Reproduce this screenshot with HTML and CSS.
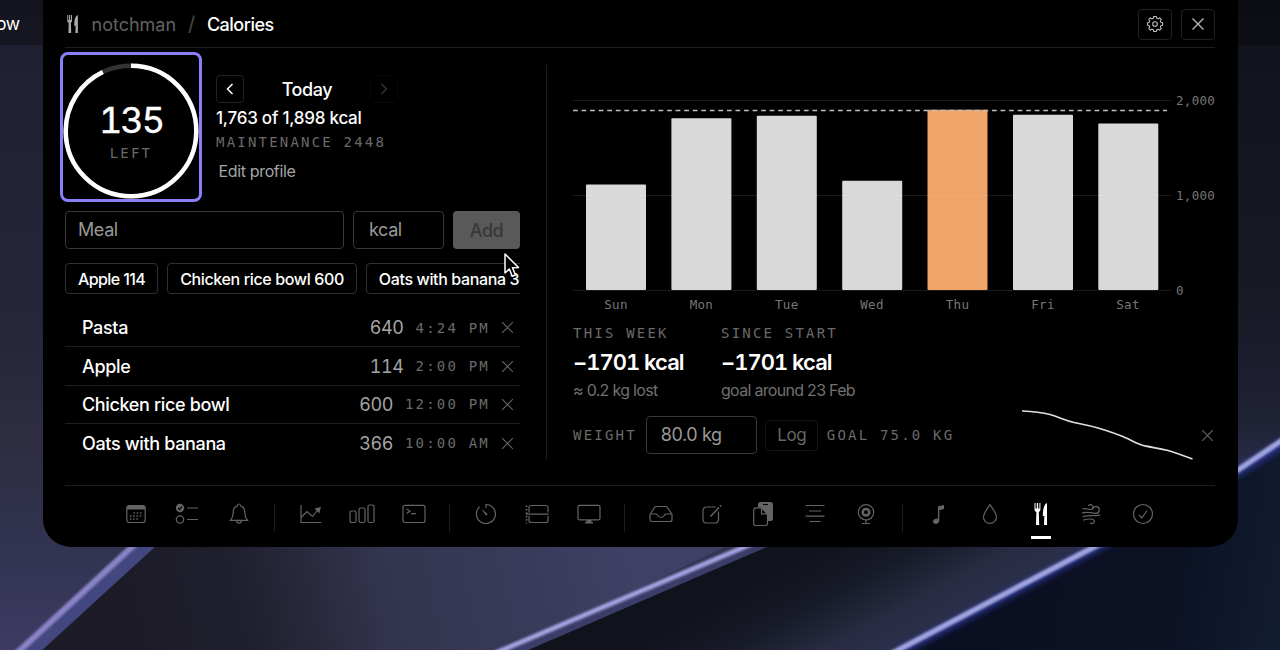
FILE: index.html
```
<!DOCTYPE html>
<html lang="en">
<head>
    <meta charset="UTF-8">
    <meta name="viewport" content="width=device-width, initial-scale=1.0">
    <title>notchman / Calories</title>
    <link rel="stylesheet" href="styles.css">
</head>
<body>
    <!-- Desktop wallpaper -->
    <svg class="wallpaper" viewBox="0 0 1280 650" aria-hidden="true">
        <defs>
            <linearGradient id="left" x1="0" y1="0" x2="0" y2="1">
                <stop offset="0" stop-color="#1e2030"/>
                <stop offset=".5" stop-color="#25263a"/>
                <stop offset=".68" stop-color="#2e2d42"/>
                <stop offset=".84" stop-color="#313350"/>
                <stop offset="1" stop-color="#3e3b63"/>
            </linearGradient>
            <linearGradient id="mid" gradientUnits="userSpaceOnUse" x1="130" y1="610" x2="620" y2="500">
                <stop offset="0" stop-color="#1d1b28"/>
                <stop offset=".22" stop-color="#1f1f2d"/>
                <stop offset=".5" stop-color="#33344e"/>
                <stop offset="1" stop-color="#3f4064"/>
            </linearGradient>
            <linearGradient id="right" gradientUnits="userSpaceOnUse" x1="755" y1="575" x2="817" y2="691">
                <stop offset="0" stop-color="#10131b"/>
                <stop offset=".4" stop-color="#171a27"/>
                <stop offset=".75" stop-color="#282b42"/>
                <stop offset="1" stop-color="#2c2f4a"/>
            </linearGradient>
            <linearGradient id="far" gradientUnits="userSpaceOnUse" x1="1000" y1="600" x2="1280" y2="650">
                <stop offset="0" stop-color="#0b0f22"/>
                <stop offset=".6" stop-color="#0c1224"/>
                <stop offset="1" stop-color="#121c31"/>
            </linearGradient>
            <linearGradient id="edge" x1="0" y1="0" x2="0" y2="1">
                <stop offset="0" stop-color="#10121b"/>
                <stop offset=".6" stop-color="#171925"/>
                <stop offset=".85" stop-color="#202236"/>
                <stop offset="1" stop-color="#34365a"/>
            </linearGradient>
            <filter id="soft" x="-10%" y="-10%" width="120%" height="120%"><feGaussianBlur stdDeviation="1.2"/></filter>
            <filter id="glow" x="-10%" y="-10%" width="120%" height="120%"><feGaussianBlur stdDeviation="3"/></filter>
        </defs>
        <rect width="1280" height="650" fill="url(#left)"/>
        <path d="M22 660 160 525H770L490 660Z" fill="url(#mid)"/>
        <path d="M504 652 790 527H1140L890 660H504Z" fill="url(#right)"/>
        <path d="M1200 0H1280V460L1200 500Z" fill="url(#edge)"/>
        <path d="M897 651 1094 547 1238 470 1280 442V651Z" fill="url(#far)"/>
        <path d="M899 652 1094 549 1238 472 1290 439" fill="none" stroke="#2a3590" stroke-width="8" filter="url(#glow)"/>
        <path d="M14 667 166 528" stroke="#43477f" stroke-width="13"/>
        <path d="M488 663 780 537" stroke="#3c3c68" stroke-width="8"/>
        <g fill="none" filter="url(#soft)">
            <path d="M4 665 158 523" stroke="#8a84c8" stroke-width="6"/>
            <path d="M472 663 770 536" stroke="#a4a2e0" stroke-width="5"/>
            <path d="M885 657 1094 547 1238 470 1290 435" stroke="#a0a4de" stroke-width="5.5"/>
        </g>
    </svg>
    <div class="menubar">ow</div>

    <main class="panel">
        <header class="header">
            <svg class="brand-icon" width="12" height="18" viewBox="0 0 14 22" fill="currentColor">
                <path d="M0 0h1.2v6h1V0h1.3v6h1V0h1.3v7c0 1.3-.6 2-1.4 2.5L4.8 22H1.4l.4-12.500C.7 9 0 8.300 0 7zM13 0v22H9.900l.3-9H8.500C8.500 5.500 10 1 13 0z"/>
            </svg>
            <span class="app">notchman</span>
            <span class="slash">/</span>
            <span class="title">Calories</span>
            <button class="icon-btn push">
                <svg width="18" height="18" viewBox="0 0 18 18" fill="none" stroke="currentColor" stroke-width="1.1" stroke-linejoin="round">
                    <path d="M7.700 1.500h2.600l.5 1.800 1.300.5 1.600-.9 1.500 1.500-.9 1.600.5 1.300 1.700.5v2.400l-1.700.5-.5 1.300.9 1.600-1.500 1.500-1.600-.9-1.300.5-.5 1.800H7.700l-.5-1.800-1.300-.5-1.600.9-1.500-1.500.9-1.600-.5-1.300-1.700-.5V7.800l1.700-.5.5-1.300-.9-1.600 1.500-1.500 1.600.9 1.300-.5z"/>
                    <circle cx="9" cy="9" r="2.300"/>
                </svg>
            </button>
            <button class="icon-btn">
                <svg width="12" height="12" viewBox="0 0 12 12" stroke="currentColor" stroke-width="1.300"><path d="M.5.5l11 11M11.500.5l-11 11"/></svg>
            </button>
        </header>

        <div class="content">
            <section class="log">
                <div class="summary">
                    <button class="gauge">
                        <svg class="ring" width="136" height="136" viewBox="0 0 136 136" fill="none" stroke-width="4.500">
                            <circle cx="68" cy="68" r="65.300" stroke="#333"/>
                            <circle cx="68" cy="68" r="65.300" stroke="#fff" pathLength="1898" stroke-dasharray="1763 1898" transform="rotate(-90 68 68)"/>
                        </svg>
                        <span class="gauge-value">135</span>
                        <span class="gauge-label">LEFT</span>
                    </button>
                    <div class="day">
                        <div class="day-nav">
                            <button class="step"><svg width="8" height="12" viewBox="0 0 8 12" fill="none" stroke="currentColor" stroke-width="1.500"><path d="M6.500 1 1.500 6l5 5"/></svg></button>
                            <span class="day-name">Today</span>
                            <button class="step off"><svg width="8" height="12" viewBox="0 0 8 12" fill="none" stroke="currentColor" stroke-width="1.500"><path d="m1.500 1 5 5-5 5"/></svg></button>
                        </div>
                        <div class="eaten">1,763 of 1,898 kcal</div>
                        <div class="mono maintenance">MAINTENANCE 2448</div>
                        <div class="edit">Edit profile</div>
                    </div>
                </div>

                <div class="form">
                    <div class="field meal">Meal</div>
                    <div class="field kcal">kcal</div>
                    <button class="add">Add</button>
                </div>

                <div class="chips">
                    <span class="chip tight">Apple 114</span>
                    <span class="chip">Chicken rice bowl 600</span>
                    <span class="chip">Oats with banana 366</span>
                </div>

                <ul class="meals">
                    <li><span class="name">Pasta</span><span class="amount">640</span><span class="mono time">4:24 PM</span><svg class="remove" viewBox="0 0 10 10"><path d="M0 0l10 10M10 0 0 10"/></svg></li>
                    <li><span class="name">Apple</span><span class="amount">114</span><span class="mono time">2:00 PM</span><svg class="remove" viewBox="0 0 10 10"><path d="M0 0l10 10M10 0 0 10"/></svg></li>
                    <li><span class="name">Chicken rice bowl</span><span class="amount">600</span><span class="mono time">12:00 PM</span><svg class="remove" viewBox="0 0 10 10"><path d="M0 0l10 10M10 0 0 10"/></svg></li>
                    <li><span class="name">Oats with banana</span><span class="amount">366</span><span class="mono time">10:00 AM</span><svg class="remove" viewBox="0 0 10 10"><path d="M0 0l10 10M10 0 0 10"/></svg></li>
                </ul>
            </section>

            <section class="trends">
                <svg class="chart" width="642" height="230" viewBox="573 90 642 230">
                    <g class="bars">
                        <rect x="586" y="184.500" width="60" height="105.500" rx="1"/>
                        <rect x="671.400" y="118.200" width="60" height="171.800" rx="1"/>
                        <rect x="756.800" y="115.700" width="60" height="174.300" rx="1"/>
                        <rect x="842.200" y="180.700" width="60" height="109.300" rx="1"/>
                        <rect class="over" x="927.500" y="109.800" width="60" height="180.200" rx="1"/>
                        <rect x="1013" y="114.800" width="60" height="175.200" rx="1"/>
                        <rect x="1098.300" y="123.400" width="60" height="166.600" rx="1"/>
                    </g>
                    <path class="grid" d="M573 100.500h598M573 195.500h598M573 290.500h598"/>
                    <path class="target" d="M573 110.600h594"/>
                    <g class="axis">
                        <text x="1176" y="105">2,000</text>
                        <text x="1176" y="200">1,000</text>
                        <text x="1176" y="294.500">0</text>
                    </g>
                    <g class="axis days">
                        <text x="616" y="308.500">Sun</text>
                        <text x="701.400" y="308.500">Mon</text>
                        <text x="786.800" y="308.500">Tue</text>
                        <text x="872" y="308.500">Wed</text>
                        <text x="957.500" y="308.500">Thu</text>
                        <text x="1043" y="308.500">Fri</text>
                        <text x="1128" y="308.500">Sat</text>
                    </g>
                </svg>

                <div class="stats">
                    <div class="stat">
                        <div class="mono">THIS WEEK</div>
                        <div class="stat-value">−1701 kcal</div>
                        <div class="stat-note">≈ 0.2 kg lost</div>
                    </div>
                    <div class="stat">
                        <div class="mono">SINCE START</div>
                        <div class="stat-value">−1701 kcal</div>
                        <div class="stat-note">goal around 23 Feb</div>
                    </div>
                </div>

                <div class="weight">
                    <span class="mono">WEIGHT</span>
                    <div class="field kg">80.0 kg</div>
                    <button class="log-btn">Log</button>
                    <span class="mono">GOAL 75.0 KG</span>
                    <svg class="spark" width="172" height="52" viewBox="1021 409 172 52" fill="none">
                        <path d="M1022 411c10 .3 19 1 28 3.500 10 3 14 5.500 24 8 8 1.700 14 2.500 24 5.500 10 3 18 5.500 27 9.500 8 3.500 13 7 21 8.700 8 1.600 13 1.800 22 4.300 9 2.800 15 5 24.500 8.500" stroke="#e0e0e0" stroke-width="1.700"/>
                    </svg>
                    <svg class="remove" viewBox="0 0 10 10"><path d="M0 0l10 10M10 0 0 10"/></svg>
                </div>
            </section>
        </div>

        <nav class="tools">
            <span class="tool"><svg viewBox="0 0 24 24"><rect x="2.800" y="3.500" width="18.400" height="17" rx="2.500"/><path class="solid" d="M3 7.500V5.500a2 2 0 0 1 2-2h14a2 2 0 0 1 2 2v2z"/><path d="M9.500 11h9.500M6 14h13M6 17h9.500" stroke-width="1.500" stroke-dasharray="1.500 1.700"/></svg></span>
            <span class="tool"><svg viewBox="0 0 24 24"><circle class="solid" cx="5" cy="6" r="4.200"/><path d="m3.200 6 1.400 1.600L6.900 4.300" stroke="#000"/><circle cx="5" cy="17.500" r="3.700"/><path d="M12 6h11M12 17.500h11"/></svg></span>
            <span class="tool"><svg viewBox="0 0 24 24"><path d="M3.500 18.300c1.600-2 2.600-3 2.600-7.300 0-3.500 1.400-6.300 4.200-7 .2-1.300.8-2 1.700-2s1.500.7 1.700 2c2.800.7 4.200 3.500 4.200 7 0 4.300 1 5.300 2.600 7.300zM9.500 18.500c.2 1.800 1.100 2.700 2.500 2.700s2.300-.9 2.500-2.700"/></svg></span>
            <i class="sep"></i>
            <span class="tool"><svg viewBox="0 0 24 24"><path d="M2 3v17.500h20.500M2.500 15l5.500-5.500 5.500 5L19.500 7"/><path class="solid" d="M15.500 6.500 22 5l-1.700 6.500z"/></svg></span>
            <span class="tool wide"><svg viewBox="0 0 28 24"><rect x="2" y="9" width="6" height="11.500" rx="1.500"/><rect x="11" y="6" width="6" height="14.500" rx="1.500"/><rect x="20" y="3" width="6" height="17.500" rx="1.500"/></svg></span>
            <span class="tool"><svg viewBox="0 0 24 24"><rect x="1" y="3.300" width="22" height="17.200" rx="2"/><path d="m4.500 7 3.500 2.200-3.500 2.200M9 11.700h5"/></svg></span>
            <i class="sep"></i>
            <span class="tool"><svg viewBox="0 0 24 24"><path d="M12 6V2.500a9.500 9.500 0 1 1-6.300 2.300"/><path class="solid" d="M7.200 6.800 13 11.500a1 1 0 0 1-1.500 1.500z"/></svg></span>
            <span class="tool"><svg viewBox="0 0 24 24"><path d="M4 10.500V5.500a2 2 0 0 1 2-2h15a2 2 0 0 1 2 2v5M1 12.200h22.500M4 14v4.500a2 2 0 0 0 2 2h15a2 2 0 0 0 2-2V14"/><path d="M1.500 3.500v18" stroke-width="1.700" stroke-dasharray="1.700 1.700"/></svg></span>
            <span class="tool"><svg viewBox="0 0 24 24"><rect x="1" y="3.300" width="22" height="14.500" rx="1.500"/><path class="solid" d="M9.500 18h5v2H16v1.500H8V20h1.500z"/></svg></span>
            <i class="sep"></i>
            <span class="tool"><svg viewBox="0 0 24 24"><path d="M1 12.500 5.500 5.500Q6 4.500 7.500 4.500h9q1.500 0 2 1l4.500 7v5a2 2 0 0 1-2 2H3a2 2 0 0 1-2-2zM1 12h6.500c1 0 1 3.500 4.500 3.500s3.500-3.500 4.500-3.500H23"/></svg></span>
            <span class="tool"><svg viewBox="0 0 24 24"><path d="M15.500 5H6.500a3.500 3.500 0 0 0-3.500 3.500V17.500a3.500 3.500 0 0 0 3.500 3.500h8.500a3.500 3.500 0 0 0 3.500-3.500V9.500"/><path d="m10.500 14.500 8.500-9" stroke-width="1.500"/><path d="m20 4.500 1-1" stroke-width="1.800"/></svg></span>
            <span class="tool"><svg viewBox="0 0 24 24"><path class="solid" d="M7 5V2.500A2.500 2.500 0 0 1 9.500 0h10A2.500 2.500 0 0 1 22 2.500v14a2.500 2.500 0 0 1-2.500 2.500H17v-6l-7-8z"/><path d="M12 2.500h5" stroke="#000"/><path d="M10.500 5.800H5.200a2.500 2.500 0 0 0-2.500 2.500v12.900a2.500 2.500 0 0 0 2.500 2.500h8.800a2.500 2.500 0 0 0 2.500-2.500v-9zM10.500 5.800v6h6"/></svg></span>
            <span class="tool"><svg viewBox="0 0 24 24"><path d="M2.500 3.500h19M6 9h12M2.500 14.200h19M6.500 19.500h11"/></svg></span>
            <span class="tool"><svg viewBox="0 0 24 24"><circle cx="12" cy="10.300" r="7.700"/><circle cx="12" cy="10.300" r="3.300" stroke-width="2.500"/><path d="M12 18v3.500M8 21.500h8"/></svg></span>
            <i class="sep"></i>
            <span class="tool"><svg viewBox="0 0 24 24"><path class="solid" d="M12 4.200 18 3v4l-4.700 1.200V18c0 2.300-1.400 4-3.500 4-1.500 0-2.800-.9-2.800-2.500s1.500-2.600 3.300-2.800c1-.1 1.700-.3 1.700-1.200z"/></svg></span>
            <span class="tool"><svg viewBox="0 0 24 24"><path d="M12 2.500c2 3.500 6.500 8.500 6.500 12.700a6.500 6.200 0 0 1-13 0C5.500 11 10 6 12 2.500z"/></svg></span>
            <span class="tool active"><svg viewBox="0 0 24 24"><path class="solid" d="M5.500 1h1v5.500h1.300V1h1.300v5.500h1.300V1h1V7.500c0 1.200-.7 2-1.600 2.500l.4 13H7l.4-13C6.300 9.500 5.500 8.700 5.500 7.500zM18 1v22h-3l.3-9h-1.500C13.800 6.500 15.500 2 18 1z"/></svg></span>
            <span class="tool"><svg viewBox="0 0 24 24"><path d="M2.500 7c3-1.300 5 .5 8 .5a2.400 2.400 0 1 0-2-3.700M2 11c5-2 8 .3 14 .3a3.300 3.300 0 1 0-3.300-3.800M2.500 14.800c5-1.800 9-1.200 13-1.200 2 0 3.500 0 4.500-.8M3 18.300c3-1.300 6-1.500 9-1.200a2.300 2.300 0 1 1-2 3.600"/></svg></span>
            <span class="tool"><svg viewBox="0 0 24 24"><circle cx="12" cy="12" r="9.500"/><path d="m8 12.800 2.800 3.200L16 8.500"/></svg></span>
        </nav>
    </main>

    <svg class="cursor" width="20" height="28" viewBox="0 0 20 28"><path d="M2 2v19l4.300-4 3 7.300 3.200-1.300-3-7.200 6-.3z" fill="#000" stroke="#fff" stroke-width="1.500" stroke-linejoin="round"/></svg>
</body>
</html>
```
FILE: styles.css
```
* { box-sizing: border-box; }
body {
    margin: 0;
    width: 1280px;
    height: 650px;
    overflow: hidden;
    background: #1e2030;
    color: #fff;
    font-family: Inter, "Liberation Sans", sans-serif;
    font-size: 18px;
    letter-spacing: -0.4px;
}
button {
    background: none;
    border: 0;
    padding: 0;
    color: inherit;
    font: inherit;
    letter-spacing: inherit;
}
.wallpaper {
    position: absolute;
    inset: 0;
    width: 1280px;
    height: 650px;
}
.menubar {
    position: absolute;
    inset: 0 0 auto 0;
    height: 45px;
    line-height: 48px;
    font-size: 17.500px;
    text-indent: -4px;
    background: rgba(8, 9, 14, 0.45);
}

/* panel */
.panel {
    position: relative;
    width: 1195px;
    height: 547px;
    margin-left: 42.500px;
    padding: 0 23px 0 22.500px;
    background: #000;
    border-radius: 0 0 28px 28px;
    display: flex;
    flex-direction: column;
}
.header {
    height: 48px;
    padding-top: 1px;
    border-bottom: 1px solid #1c1c1c;
    display: flex;
    align-items: center;
}
.brand-icon { color: #aaa; margin-left: 1.500px; }
.app { color: #626262; margin-left: 13px; letter-spacing: 0; }
.slash { color: #4a4a4a; margin: 0 12px; font-size: 20px; }
.title { font-weight: 500; letter-spacing: -0.500px; }
.push { margin-left: auto; }
.icon-btn {
    width: 34px;
    height: 31px;
    border: 1px solid #222;
    border-radius: 4px;
    color: #bbb;
    display: flex;
    align-items: center;
    justify-content: center;
}
.icon-btn + .icon-btn { margin-left: 9px; }
.content {
    height: 437px;
    display: flex;
}
.mono {
    font-family: "DejaVu Sans Mono", monospace;
    font-size: 14px;
    letter-spacing: 2.2px;
    color: #6a6a6a;
    white-space: nowrap;
}

/* left column */
.log { width: 455px; }
.summary {
    height: 151px;
    padding-top: 7px;
    display: flex;
}
.gauge {
    position: relative;
    width: 136px;
    height: 144px;
    margin-left: -2px;
    outline: 3px solid #8a80f6;
    border-radius: 5px;
    display: flex;
    flex-direction: column;
    align-items: center;
}
.ring {
    position: absolute;
    left: 0;
    bottom: 0;
}
.gauge-value {
    margin-top: 43px;
    font-size: 36px;
    line-height: 44px;
    letter-spacing: -2px;
    font-feature-settings: "tnum";
    -webkit-text-stroke: 0.400px #fff;
}
.gauge-label {
    font-family: "DejaVu Sans Mono", monospace;
    font-size: 14px;
    line-height: 22px;
    letter-spacing: 2.200px;
    color: #6a6a6a;
}
.day {
    padding-top: 20px;
    margin-left: 17px;
}
.day-nav {
    width: 182px;
    height: 28px;
    display: flex;
    align-items: center;
    justify-content: space-between;
}
.step {
    width: 28px;
    height: 28px;
    border: 1px solid #222;
    border-radius: 4px;
    display: flex;
    align-items: center;
    justify-content: center;
}
.step.off { color: #333; border-color: #080808; }
.day-name { font-weight: 500; }
.eaten {
    font-size: 17px;
    font-weight: 500;
    line-height: 30px;
    letter-spacing: -0.230px;
}
.maintenance { line-height: 18px; }
.edit {
    margin-left: 2.500px;
    font-size: 16px;
    line-height: 41px;
    letter-spacing: -0.350px;
    color: #a5a5a5;
}
.form {
    margin-top: 12px;
    display: flex;
    gap: 9px;
}
.field {
    height: 38px;
    border: 1px solid #383838;
    border-radius: 4px;
    line-height: 36px;
    color: #999;
}
.meal { width: 279px; padding-left: 12px; }
.kcal { width: 91px; padding-left: 15px; }
.add {
    width: 67px;
    height: 38px;
    border-radius: 4px;
    background: #595959;
    color: #383838;
    font-weight: 500;
}
.chips {
    margin-top: 14px;
    display: flex;
    gap: 9px;
    overflow: hidden;
}
.chip {
    flex: none;
    height: 31px;
    padding: 0 12px;
    border: 1px solid #303030;
    border-radius: 4px;
    font-size: 16px;
    font-weight: 500;
    line-height: 30px;
    letter-spacing: -0.370px;
}
.chip.tight { letter-spacing: -0.600px; }
.meals {
    list-style: none;
    margin: 15px 0 0;
    padding: 0;
}
.meals li {
    height: 38.400px;
    padding: 0 7px 0 17px;
    border-bottom: 1px solid #1e1e1e;
    display: flex;
    align-items: center;
}
.meals li:last-child { border: 0; }
.name { flex: 1; font-weight: 500; letter-spacing: -0.350px; }
.amount {
    margin-right: 12px;
    color: #a5a5a5;
    font-feature-settings: "tnum";
}
.time { margin-right: 12px; }
.remove {
    width: 11px;
    height: 11px;
    fill: none;
    stroke: #666;
    stroke-width: 1;
}

/* right column */
.trends {
    width: 669px;
    height: 394px;
    margin-top: 17px;
    margin-left: 26px;
    padding-top: 25px;
    padding-left: 26px;
    border-left: 1px solid #1c1c1c;
}
.chart { display: block; }
.bars rect { fill: #d9d9d9; }
.bars .over { fill: #f0a468; }
.grid { stroke: rgba(255, 255, 255, 0.1); }
.target {
    stroke: #c0c0c0;
    stroke-width: 1.500;
    stroke-dasharray: 4.800 3.750;
}
.axis {
    font-family: "DejaVu Sans Mono", monospace;
    font-size: 12.500px;
    letter-spacing: 0.300px;
    fill: #767676;
}
.days { text-anchor: middle; }
.stats {
    display: flex;
    margin-top: 3px;
}
.stat { width: 148px; white-space: nowrap; }
.stat .mono { line-height: 20px; }
.stat-value {
    font-size: 22px;
    font-weight: 600;
    line-height: 38px;
    letter-spacing: -1px;
    font-feature-settings: "tnum";
}
.stat-note {
    font-size: 16px;
    line-height: 19px;
    letter-spacing: -0.700px;
    color: #707070;
}
.weight {
    height: 52px;
    margin-top: 9px;
    display: flex;
    align-items: center;
}
.kg {
    width: 111px;
    margin-left: 9px;
    padding-left: 14px;
}
.log-btn {
    width: 53px;
    height: 31px;
    margin: 0 8.500px;
    border: 1px solid #161616;
    border-radius: 4px;
    font-size: 17px;
    color: #666;
}
.spark { margin-left: auto; }
.weight .remove { margin: 0 2px 0 9px; }

/* bottom tool switcher */
.tools {
    height: 61px;
    border-top: 1px solid #1c1c1c;
    display: flex;
    justify-content: center;
}
.tool {
    position: relative;
    width: 51.250px;
    height: 54px;
    color: #646464;
    display: flex;
    align-items: center;
    justify-content: center;
}
.tool svg {
    width: 24px;
    height: 24px;
    margin-top: 1px;
    fill: none;
    stroke: currentColor;
    stroke-width: 1.200;
}
.tool.wide svg { width: 28px; }
.tool svg .solid { fill: currentColor; stroke: none; }
.tool.active { color: #fff; }
.tool.active::after {
    content: "";
    position: absolute;
    left: 16px;
    bottom: 1px;
    width: 20px;
    height: 3px;
    background: #fff;
}
.sep {
    width: 1px;
    height: 28px;
    margin: 18px 10.100px 0;
    background: #1e1e1e;
}
.cursor {
    position: absolute;
    left: 503px;
    top: 252px;
}
```
